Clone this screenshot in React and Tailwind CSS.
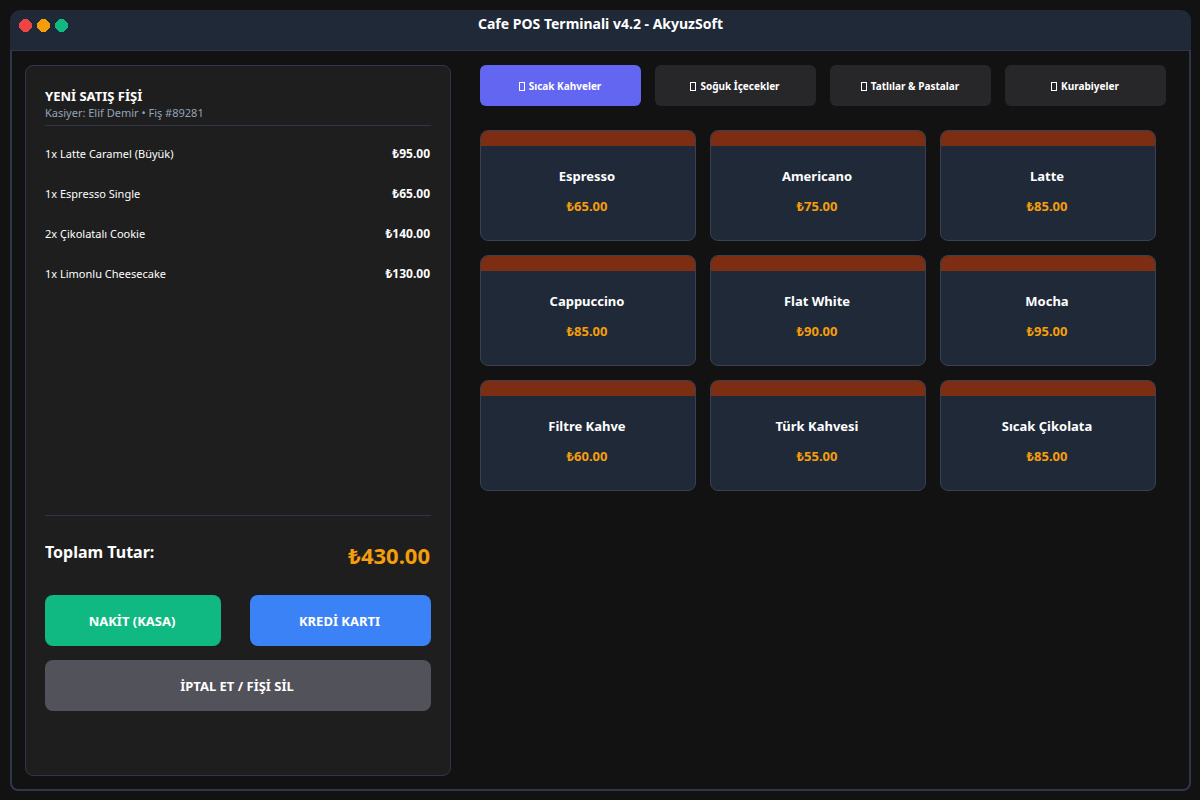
const categories = ["Sıcak Kahveler", "Soğuk İçecekler", "Tatlılar & Pastalar", "Kurabiyeler"];

const products = [
    { name: "Espresso", price: "₺65.00" },
    { name: "Americano", price: "₺75.00" },
    { name: "Latte", price: "₺85.00" },
    { name: "Cappuccino", price: "₺85.00" },
    { name: "Flat White", price: "₺90.00" },
    { name: "Mocha", price: "₺95.00" },
    { name: "Filtre Kahve", price: "₺60.00" },
    { name: "Türk Kahvesi", price: "₺55.00" },
    { name: "Sıcak Çikolata", price: "₺85.00" },
];

const items = [
    { name: "1x Latte Caramel (Büyük)", price: "₺95.00" },
    { name: "1x Espresso Single", price: "₺65.00" },
    { name: "2x Çikolatalı Cookie", price: "₺140.00" },
    { name: "1x Limonlu Cheesecake", price: "₺130.00" },
];

const Dot = ({ className }) => (
    <svg viewBox="0 0 13 13" className={`size-[13px] ${className}`} fill="currentColor" shapeRendering="crispEdges">
        <path d="M4 0H9V1H10V2H11V3H12V4H13V9H12V10H11V11H10V12H9V13H4V12H3V11H2V10H1V9H0V4H1V3H2V2H3V1H4Z" />
    </svg>
);

const TitleBar = () => {
    return (
        <header className="grid grid-cols-[1fr_auto_1fr] items-start h-[41px] px-[9px] pt-1 bg-[#1f2937] border-b border-[#2d3748] rounded-t-[10px]">
            <div className="flex gap-[5px] pt-[5px]">
                <Dot className="text-[#ef4444]" />
                <Dot className="text-[#f59e0b]" />
                <Dot className="text-[#10b981]" />
            </div>
            <h1 className="text-[14px] leading-5 font-bold">Cafe POS Terminali v4.2 - AkyuzSoft</h1>
        </header>
    );
}

const Receipt = () => {
    return (
        <aside className="flex flex-col w-[426px] shrink-0 px-[19px] pt-5 bg-[#1e1e1e] border border-[#2d3748] rounded-lg">
            <div className="border-b border-[#2d3748] pb-[5px]">
                <h2 className="text-[13px] leading-5 font-bold">YENİ SATIŞ FİŞİ</h2>
                <p className="text-[11px] leading-[14px] text-[#94a3b8]">Kasiyer: Elif Demir • Fiş #89281</p>
            </div>

            <ul className="pt-2">
                {items.map((item) => (
                    <li key={item.name} className="flex justify-between items-center h-10 pr-px">
                        <span className="text-[11px]">{item.name}</span>
                        <span className="text-[12px] font-bold">{item.price}</span>
                    </li>
                ))}
            </ul>

            <div className="mt-auto mb-16 border-t border-[#2d3748]">
                <div className="flex justify-between items-start h-[79px] pt-6 pr-px">
                    <span className="text-[16px] leading-6 font-bold">Toplam Tutar:</span>
                    <span className="text-[22px] leading-[30px] font-bold text-[#f59e0b]">₺430.00</span>
                </div>
                <div className="grid grid-cols-[176fr_181fr] gap-x-[29px] gap-y-[14px] text-[13px] font-bold">
                    <button className="h-[51px] pt-[2px] pr-[2px] rounded-lg bg-[#10b981]">NAKİT (KASA)</button>
                    <button className="h-[51px] pt-[2px] pr-[2px] rounded-lg bg-[#3b82f6]">KREDİ KARTI</button>
                    <button className="h-[51px] pt-[2px] pr-[2px] rounded-lg bg-[#52525b] col-span-2">İPTAL ET / FİŞİ SİL</button>
                </div>
            </div>
        </aside>
    );
}

const Category = ({ name, active }) => {
    return (
        <button className={`flex items-center justify-center gap-1 h-[41px] pt-px pr-px rounded-md text-[10px] font-bold ${active ? "bg-[#6366f1]" : "bg-[#27272a]"}`}>
            <span className="w-[6px] h-[9px] border border-white" aria-hidden="true"></span>
            {name}
        </button>
    );
}

const ProductCard = ({ name, price }) => {
    return (
        <button className="flex flex-col h-[111px] bg-[#1f2937] border border-[#374151] rounded-lg overflow-hidden text-center">
            <span className="w-full h-[15px] bg-[#7c2d12]"></span>
            <span className="w-full pt-5 pr-[2px] text-[13px] leading-5 font-bold">{name}</span>
            <span className="w-full pt-[10px] pr-[2px] text-[13px] leading-5 font-bold text-[#f59e0b]">{price}</span>
        </button>
    );
}

const App = () => {
    return (
        <div className="flex flex-col min-h-screen pt-[10px] pl-[10px] pr-[9px] pb-[9px] bg-[#121212] text-white font-['Noto_Sans',sans-serif]">
            <TitleBar />
            <main className="flex flex-1 gap-[29px] pt-[14px] pl-[13px] pr-[23px] pb-[13px] border-2 border-t-0 border-[#2d3748] rounded-b-lg">
                <Receipt />
                <section className="flex-1">
                    <nav className="grid grid-cols-4 gap-[14px]">
                        {categories.map((name, i) => (
                            <Category key={name} name={name} active={i === 0} />
                        ))}
                    </nav>
                    <div className="grid grid-cols-3 gap-[14px] mt-6 mr-[10px]">
                        {products.map((p) => (
                            <ProductCard key={p.name} name={p.name} price={p.price} />
                        ))}
                    </div>
                </section>
            </main>
        </div>
    );
}

export default App;
